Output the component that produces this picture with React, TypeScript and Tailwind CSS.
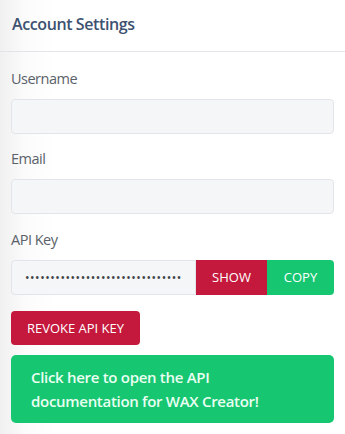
export default function App() {
  const font = { fontFamily: '"Open Sans", "Noto Sans", sans-serif' };
  return (
    <div
      className="w-[345px] h-[434px] overflow-hidden bg-[linear-gradient(90deg,#f0f0f0_0px,#fbfbfb_25px,#ffffff_55px)]"
      style={font}
    >
      <div className="h-[52px] border-b border-[#e1e5eb] flex items-center px-[12px]">
        <h6 className="text-[16px] font-semibold text-[#3d5170] leading-none tracking-[-0.4px] -mt-[3px]">Account Settings</h6>
      </div>
      <div className="px-[11px] pt-[16px]">
        <label className="block text-[14.5px] text-[#5a6169] leading-[22px] mb-[9px] tracking-[-0.5px]">Username</label>
        <div className="h-[35px] rounded-[4px] border border-[#e1e5eb] bg-[#f5f6f7]" />
        <label className="block text-[14.5px] text-[#5a6169] leading-[22px] mt-[14px] mb-[9px] tracking-[-0.5px]">Email</label>
        <div className="h-[35px] rounded-[4px] border border-[#e1e5eb] bg-[#f5f6f7]" />
        <label className="block text-[14.5px] text-[#5a6169] leading-[22px] mt-[15px] mb-[9px] tracking-[-0.5px]">API Key</label>
        <div className="flex h-[35px]">
          <div className="w-[185px] rounded-l-[4px] border border-[#e1e5eb] bg-[#f5f6f7] flex items-center pl-[13px] text-[#3d4348] text-[12px] tracking-[0.55px] overflow-hidden whitespace-nowrap">
            •••••••••••••••••••••••••••••••
          </div>
          <button className="w-[71px] bg-[#c4183c] text-white text-[13px] leading-none">SHOW</button>
          <button className="w-[67px] bg-[#17c671] text-white text-[13px] leading-none rounded-r-[4px]">COPY</button>
        </div>
        <button className="mt-[16px] h-[34px] w-[129px] rounded-[4px] bg-[#c4183c] text-white text-[13px] leading-none">
          REVOKE API KEY
        </button>
        <div className="mt-[10px] h-[68px] rounded-[5px] bg-[#17c671] flex flex-col justify-center pl-[20px]">
          <p className="text-[15px] font-semibold text-[#e9fff1] leading-[24px] tracking-[-0.3px]">
            Click here to open the API
            <br />
            documentation for WAX Creator!
          </p>
        </div>
      </div>
    </div>
  );
}
